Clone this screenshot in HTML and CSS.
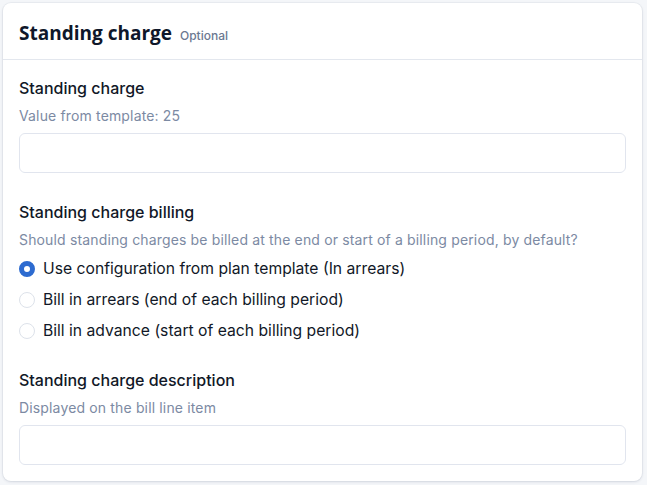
FILE: index.html
```html
<!DOCTYPE html>
<html>
<head>
<meta charset="utf-8">
<link rel="stylesheet" href="styles.css">
</head>
<body>
<div class="card">
  <div class="card-header">
    <h2 class="title">Standing charge</h2>
    <span class="optional">Optional</span>
  </div>
  <div class="card-body">
    <div class="field">
      <div class="label">Standing charge</div>
      <div class="help">Value from template: 25</div>
      <input class="input" type="text">
    </div>
    <div class="field">
      <div class="label">Standing charge billing</div>
      <div class="help">Should standing charges be billed at the end or start of a billing period, by default?</div>
      <div class="radios">
        <label class="radio"><span class="dot checked"></span><span>Use configuration from plan template (In arrears)</span></label>
        <label class="radio"><span class="dot"></span><span>Bill in arrears (end of each billing period)</span></label>
        <label class="radio"><span class="dot"></span><span>Bill in advance (start of each billing period)</span></label>
      </div>
    </div>
    <div class="field">
      <div class="label">Standing charge description</div>
      <div class="help">Displayed on the bill line item</div>
      <input class="input" type="text">
    </div>
  </div>
</div>
</body>
</html>
```
FILE: styles.css
```css
html, body {
  margin: 0;
  padding: 0;
  background: #f4f6f9;
}
body {
  padding: 3px 5px 4px 3px;
  font-family: Inter, "DejaVu Sans", sans-serif;
  color: #111827;
}
.card {
  background: #fff;
  border-radius: 8px;
  box-shadow: 0 1px 3px rgba(30, 45, 80, 0.12), 0 0 0 1px rgba(30, 45, 80, 0.04);
  overflow: hidden;
}
.card-header {
  display: flex;
  align-items: baseline;
  gap: 8px;
  padding: 17px 16px 13px;
  border-bottom: 1px solid #e3e7ee;
}
.title {
  margin: 0;
  font-family: "Open Sans", sans-serif;
  font-weight: 700;
  font-size: 19px;
  line-height: 26px;
  color: #0f172a;
}
.optional {
  font-size: 12px;
  font-weight: 500;
  color: #6b7891;
}
.card-body {
  display: flex;
  flex-direction: column;
  gap: 29px;
  padding: 18px 16px 16px 16px;
}
.field {
  display: flex;
  flex-direction: column;
}
.label {
  font-size: 16px;
  line-height: 20px;
  font-weight: 500;
  color: #111827;
}
.help {
  margin-top: 9px;
  font-size: 14px;
  letter-spacing: 0.15px;
  line-height: 18px;
  color: #7c8aa3;
}
.input {
  margin-top: 8px;
  height: 40px;
  box-sizing: border-box;
  border: 1px solid #e1e5ee;
  border-radius: 6px;
  background: #fff;
  font: inherit;
  padding: 0 10px;
}
.radios {
  display: flex;
  flex-direction: column;
  gap: 10px;
  margin-top: 9px;
}
.radio {
  display: flex;
  align-items: center;
  gap: 8px;
  font-size: 15.7px;
  line-height: 21px;
  color: #111827;
}
.dot {
  width: 16px;
  height: 16px;
  box-sizing: border-box;
  border-radius: 50%;
  border: 1.5px solid #dde2ea;
  background: #fff;
  flex: none;
}
.dot.checked {
  border: 5px solid #2d6bd0;
  background: #fff;
}
```
